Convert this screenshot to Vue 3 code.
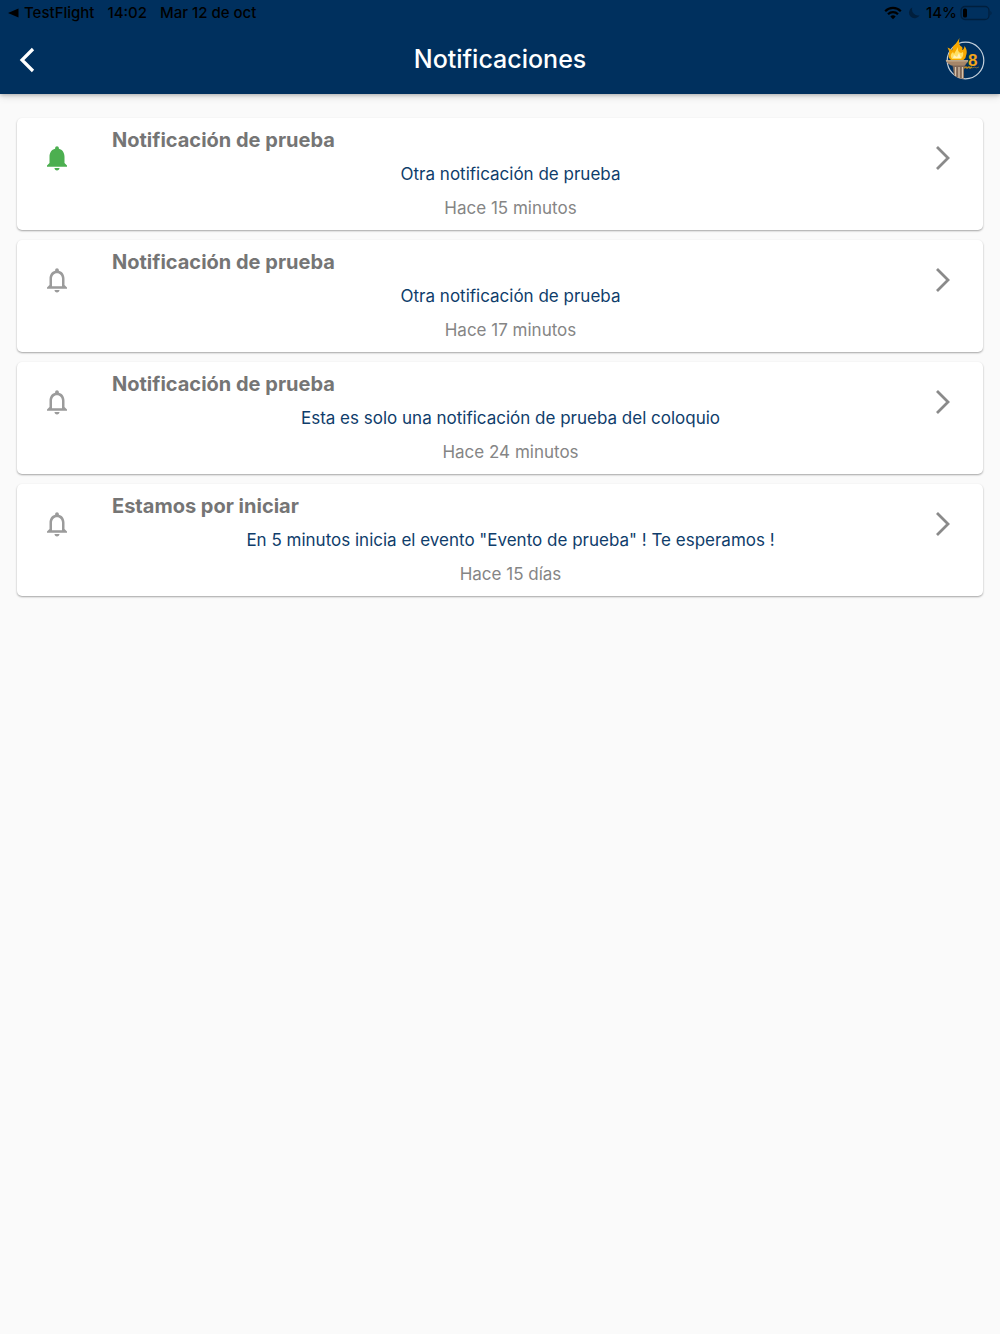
<script setup>
const notifications = [
  { id: 1, title: 'Notificación de prueba', body: 'Otra notificación de prueba', time: 'Hace 15 minutos', unread: true },
  { id: 2, title: 'Notificación de prueba', body: 'Otra notificación de prueba', time: 'Hace 17 minutos', unread: false },
  { id: 3, title: 'Notificación de prueba', body: 'Esta es solo una notificación de prueba del coloquio', time: 'Hace 24 minutos', unread: false },
  { id: 4, title: 'Estamos por iniciar', body: 'En 5 minutos inicia el evento "Evento de prueba" ! Te esperamos !', time: 'Hace 15 días', unread: false },
]
</script>

<template>
  <div class="screen">
    <header class="top">
      <div class="status">
        <div class="status-left">
          <a href="#" class="return-link">
            <svg width="12" height="10" viewBox="0 0 12 10" aria-hidden="true"><path d="M0 5 10.5 0.5v9z" /></svg>
            <span>TestFlight</span>
          </a>
          <span>14:02</span>
          <span>Mar 12 de oct</span>
        </div>
        <div class="status-right">
          <svg width="18" height="14" viewBox="0 0 18 14" fill="none" stroke="#000" stroke-width="2.2" aria-hidden="true">
            <path d="M1.2 5.2a11 11 0 0 1 15.6 0M4 8.3a7 7 0 0 1 10 0" />
            <path d="M9 13.2 6.3 10.6a3.9 3.9 0 0 1 5.4 0z" fill="#000" stroke="none" />
          </svg>
          <svg class="moon" width="12" height="12" viewBox="0 0 12 12" aria-hidden="true">
            <path d="M4.3 0.6A5.6 5.6 0 1 0 11.6 8.2 6 6 0 0 1 4.3 0.6z" />
          </svg>
          <span class="percent">14%</span>
          <svg width="33" height="16" viewBox="0 0 33 16" aria-hidden="true">
            <rect x="1" y="1.500" width="28" height="13" rx="4" fill="none" stroke="#001f3d" stroke-width="1.3" />
            <rect x="3" y="3.500" width="4" height="9" rx="1.5" />
            <path d="M30.5 5.700q2 2.300 0 4.600z" fill="#001f3d" />
          </svg>
        </div>
      </div>
      <div class="toolbar">
        <button class="back" type="button" aria-label="Volver">
          <svg width="16" height="26" viewBox="0 0 16 26" fill="none" stroke="#fff" stroke-width="3.2" aria-hidden="true">
            <path d="M14 2 3 13l11 11" />
          </svg>
        </button>
        <h1>Notificaciones</h1>
        <button class="logo" type="button" aria-label="Coloquio">
          <svg width="42" height="44" viewBox="0 0 42 44" aria-hidden="true">
            <circle cx="21.5" cy="22.5" r="18.3" fill="none" stroke="#c3d0dc" stroke-width="1.2" />
            <path d="M8 26h14l-2 4v10.500q-6 .8-10-3.500l-1-7z" fill="#806858" />
            <path d="M11.5 29v9M15 29v11M18.5 29v11" stroke="#d6c3ab" stroke-width="1.3" />
            <path d="M1.500 22.500h23l-1.500 2.500-3 2.500H7L4 25.500z" fill="#a58669" />
            <path d="M2 22.800h22" stroke="#dfc7a3" />
            <path d="M7 22Q3 19 5.500 14L3.500 9.500q3 1 4.500 3l1-4Q12 6 15.500 0q-1.500 5 1 8 3 1 1.500 4 2 0 2.500-4 3 4 2 8-.5 4-3 6z" fill="#f6a800" />
            <path d="M8 21q-3-4 1-7l1 2 4-7q-1 5 3 6l2-1q1 4-2 7z" fill="#ffdf62" />
            <path d="m9 20 1-3 3 2 2-4 2 5z" fill="#fff1bd" />
            <text x="24" y="28" class="logo-number">8</text>
            <path d="m20 30 2-1 1 1 2-1 1 1 2-1" fill="none" stroke="#b88922" stroke-width="1.5" />
            <path d="m28 30 3-1 1 1 3-1" fill="none" stroke="#6b6542" />
          </svg>
        </button>
      </div>
    </header>

    <main>
      <ul class="list">
        <li v-for="item in notifications" :key="item.id">
          <a href="#" class="card">
            <svg class="bell" :class="{ unread: item.unread }" width="30" height="30" viewBox="0 0 24 24" role="img" :aria-label="item.unread ? 'Sin leer' : 'Leída'">
              <path v-if="item.unread" d="M12 22c1.100 0 2-.9 2-2h-4c0 1.100.89 2 2 2zm6-6v-5c0-3.070-1.640-5.640-4.500-6.320V4c0-.83-.67-1.500-1.500-1.500s-1.500.67-1.500 1.500v.68C7.630 5.360 6 7.920 6 11v5l-2 2v1h16v-1l-2-2z" />
              <path v-else d="M12 22c1.100 0 2-.9 2-2h-4c0 1.100.9 2 2 2zm6-6v-5c0-3.070-1.630-5.640-4.500-6.320V4c0-.83-.67-1.500-1.500-1.500s-1.500.67-1.500 1.500v.68C7.640 5.360 6 7.920 6 11v5l-2 2v1h16v-1l-2-2zm-2 1H8v-6c0-2.480 1.510-4.500 4-4.500s4 2.020 4 4.500v6z" />
            </svg>
            <span class="content">
              <strong>{{ item.title }}</strong>
              <span class="body">{{ item.body }}</span>
              <span class="time">{{ item.time }}</span>
            </span>
            <svg class="chevron" width="16" height="26" viewBox="0 0 16 26" fill="none" stroke="#8a8a8a" stroke-width="2.8" aria-hidden="true">
              <path d="m2 2 11 11L2 24" />
            </svg>
          </a>
        </li>
      </ul>
    </main>
  </div>
</template>

<style>
body {
  margin: 0;
  background: #fafafa;
}
</style>

<style scoped>
.screen {
  min-height: 100vh;
  background: #fafafa;
  font-family: Inter, "Liberation Sans", sans-serif;
}

.top {
  background: #00305e;
  box-shadow: 0 1px 4px rgba(0, 0, 0, 0.25), 0 3px 8px rgba(0, 0, 0, 0.1);
}

.status {
  display: flex;
  justify-content: space-between;
  align-items: center;
  height: 25px;
  padding: 0 8px;
  font-size: 15px;
  font-weight: 500;
  line-height: 25px;
  color: #000;
}

.status-left,
.status-right,
.return-link {
  display: flex;
  align-items: center;
}

.status-left {
  gap: 13px;
}

.status-right {
  gap: 6px;
  margin-right: -1px;
}

.percent {
  margin-right: -3px;
}

.return-link {
  gap: 4px;
  color: inherit;
  text-decoration: none;
}

.moon {
  fill: #001f3d;
}

.toolbar {
  display: grid;
  grid-template-columns: 1fr auto 1fr;
  align-items: center;
  height: 69px;
  padding: 0 14px;
}

h1 {
  margin: 0;
  font-size: 25px;
  font-weight: 500;
  line-height: 33px;
  color: #fff;
}

button {
  display: flex;
  padding: 0;
  border: 0;
  background: none;
  cursor: pointer;
}

.back {
  justify-self: start;
  padding: 4px 5px;
}

.logo {
  justify-self: end;
}

.logo-number {
  font-size: 17px;
  font-weight: 600;
  fill: #f0a51b;
}

.list {
  display: flex;
  flex-direction: column;
  gap: 10px;
  margin: 0;
  padding: 24px 17px;
  list-style: none;
}

.card {
  display: flex;
  align-items: flex-start;
  padding: 5px 32px 5px 25px;
  border-radius: 5px;
  background: #fff;
  box-shadow: 0 1px 2px rgba(0, 0, 0, 0.35);
  text-decoration: none;
}

.bell {
  margin-top: 20px;
  fill: #9b9b9b;
}

.bell.unread {
  fill: #4caf50;
}

.content {
  display: flex;
  flex: 1;
  flex-direction: column;
  align-items: center;
  margin: 0 26px 0 40px;
  font-size: 17px;
  line-height: 34px;
}

strong {
  align-self: flex-start;
  font-size: 20px;
  font-weight: 700;
  color: #757575;
}

.body {
  color: #0f3d6b;
}

.time {
  color: #858585;
}

.chevron {
  margin-top: 22px;
}
</style>
